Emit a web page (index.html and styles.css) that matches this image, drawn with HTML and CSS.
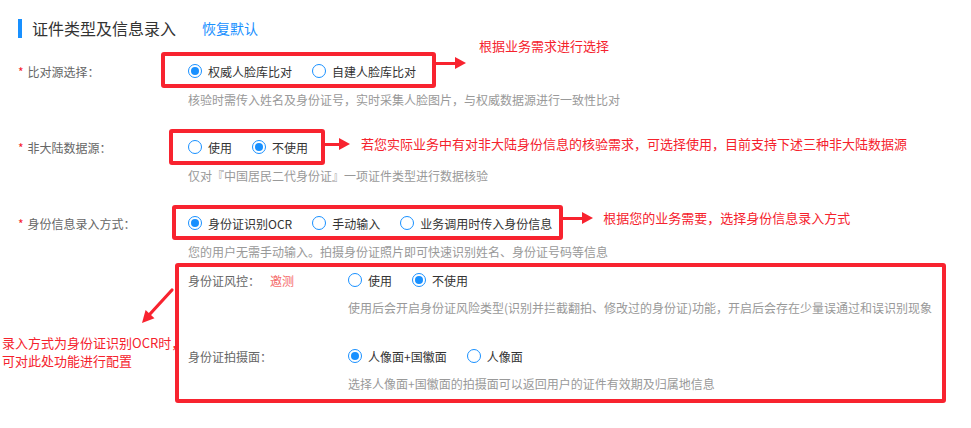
FILE: index.html
```html
<!DOCTYPE html>
<html lang="zh-CN">
<head>
  <meta charset="UTF-8">
  <meta name="viewport" content="width=device-width, initial-scale=1.0">
  <title>证件类型及信息录入</title>
  <link rel="stylesheet" href="styles.css">
</head>
<body>
  <div class="page">
    <div class="section-title">
      <span class="title-text">证件类型及信息录入</span>
      <a class="title-link">恢复默认</a>
    </div>

    <div class="form-item">
      <div class="form-label"><span class="required">*</span>比对源选择：</div>
      <div class="form-control">
        <div class="radio-group">
          <label class="radio checked"><span class="radio-dot"></span>权威人脸库比对</label>
          <label class="radio"><span class="radio-dot"></span>自建人脸库比对</label>
          <span class="frame frame-source">
            <span class="callout callout-source">
              <span class="arrow"></span>
              <span class="note">根据业务需求进行选择</span>
            </span>
          </span>
        </div>
        <div class="form-desc">核验时需传入姓名及身份证号，实时采集人脸图片，与权威数据源进行一致性比对</div>
      </div>
    </div>

    <div class="form-item">
      <div class="form-label"><span class="required">*</span>非大陆数据源：</div>
      <div class="form-control">
        <div class="radio-group">
          <label class="radio"><span class="radio-dot"></span>使用</label>
          <label class="radio checked"><span class="radio-dot"></span>不使用</label>
          <span class="frame frame-mainland">
            <span class="callout callout-mainland">
              <span class="arrow arrow-short"></span>
              <span class="note">若您实际业务中有对非大陆身份信息的核验需求，可选择使用，目前支持下述三种非大陆数据源</span>
            </span>
          </span>
        </div>
        <div class="form-desc">仅对『中国居民二代身份证』一项证件类型进行数据核验</div>
      </div>
    </div>

    <div class="form-item">
      <div class="form-label"><span class="required">*</span>身份信息录入方式：</div>
      <div class="form-control">
        <div class="radio-group">
          <label class="radio checked"><span class="radio-dot"></span>身份证识别OCR</label>
          <label class="radio"><span class="radio-dot"></span>手动输入</label>
          <label class="radio"><span class="radio-dot"></span>业务调用时传入身份信息</label>
          <span class="frame frame-input">
            <span class="callout callout-input">
              <span class="arrow"></span>
              <span class="note">根据您的业务需要，选择身份信息录入方式</span>
            </span>
          </span>
        </div>
        <div class="form-desc">您的用户无需手动输入。拍摄身份证照片即可快速识别姓名、身份证号码等信息</div>
      </div>
    </div>

    <div class="sub-panel">
      <div class="form-item sub-item">
        <div class="form-label">身份证风控：<span class="beta">邀测</span></div>
        <div class="form-control">
          <div class="radio-group">
            <label class="radio"><span class="radio-dot"></span>使用</label>
            <label class="radio checked"><span class="radio-dot"></span>不使用</label>
          </div>
          <div class="form-desc">使用后会开启身份证风险类型(识别并拦截翻拍、修改过的身份证)功能，开启后会存在少量误通过和误识别现象</div>
        </div>
      </div>

      <div class="form-item sub-item">
        <div class="form-label">身份证拍摄面：</div>
        <div class="form-control">
          <div class="radio-group">
            <label class="radio checked"><span class="radio-dot"></span>人像面+国徽面</label>
            <label class="radio"><span class="radio-dot"></span>人像面</label>
          </div>
          <div class="form-desc">选择人像面+国徽面的拍摄面可以返回用户的证件有效期及归属地信息</div>
        </div>
      </div>

      <svg class="diag-arrow" width="38" height="41" viewBox="0 0 38 41">
        <line x1="34" y1="4" x2="12" y2="28" stroke="#f8232f" stroke-width="3.2" stroke-linecap="round"/>
        <polygon points="4,37 16.5,32.2 7.6,24.1" fill="#f8232f"/>
      </svg>
      <div class="side-note">
        <div>录入方式为身份证识别OCR时，</div>
        <div>可对此处功能进行配置</div>
      </div>
    </div>
  </div>
</body>
</html>
```

FILE: styles.css
```css
body {
  margin: 0;
  background-color: #fff;
  font-family: "Noto Sans CJK SC", "Noto Sans", sans-serif;
  font-size: 12px;
  color: #333;
}

.page {
  padding: 19px 0 0 18px;
}

.section-title {
  display: flex;
  align-items: center;
  height: 19px;
  border-left: 4px solid #1890ff;
  padding-left: 10px;
}

.title-text {
  font-size: 16px;
  line-height: 19px;
  color: #333;
}

.title-link {
  margin-left: 26px;
  font-size: 14px;
  line-height: 19px;
  color: #1890ff;
  cursor: pointer;
}

.form-item {
  display: flex;
  margin-top: 28px;
  line-height: 20px;
}

.section-title + .form-item {
  margin-top: 24px;
}

.form-label {
  width: 170px;
  flex-shrink: 0;
  color: #666;
}

.required {
  color: #f5222d;
  margin-right: 4px;
}

.form-control {
  display: flex;
  flex-direction: column;
  align-items: flex-start;
}

.radio-group {
  position: relative;
  display: flex;
  align-items: center;
  gap: 20px;
  height: 20px;
}

.radio {
  display: inline-flex;
  align-items: center;
  gap: 6px;
  color: #333;
  cursor: pointer;
}

.radio-dot {
  position: relative;
  width: 14px;
  height: 14px;
  margin-top: -2px;
  box-sizing: border-box;
  border: 1px solid #1890ff;
  border-radius: 50%;
}

.radio.checked .radio-dot::after {
  content: '';
  position: absolute;
  inset: 2px;
  border-radius: 50%;
  background-color: #1890ff;
}

.form-desc {
  margin-top: 8px;
  color: #999;
}

/* red annotation boxes */
.frame {
  position: absolute;
  border: 4px solid #f8232f;
  border-radius: 3px;
  pointer-events: none;
}

.frame-source {
  inset: -10px -20px -6px -27px;
}

.frame-mainland {
  inset: -9px -17px -7px -19px;
}

.frame-input {
  inset: -9px -11px -6px -16px;
}

.callout {
  position: absolute;
  left: calc(100% + 4px);
  display: flex;
  align-items: center;
  height: 20px;
}

.callout-source {
  top: -3px;
}

.callout-mainland {
  top: 1px;
}

.callout-input {
  top: -1px;
}

.arrow {
  position: relative;
  width: 30px;
  height: 12px;
  flex-shrink: 0;
}

.arrow-short {
  width: 25px;
}

.arrow::before {
  content: '';
  position: absolute;
  left: 0;
  right: 8px;
  top: 4.5px;
  height: 3px;
  background-color: #f8232f;
}

.arrow::after {
  content: '';
  position: absolute;
  right: 0;
  top: 0;
  border-left: 11px solid #f8232f;
  border-top: 6px solid transparent;
  border-bottom: 6px solid transparent;
}

.note {
  margin-left: 10px;
  font-size: 13px;
  line-height: 20px;
  color: #f5222d;
  white-space: nowrap;
}

.callout-source .note {
  margin-left: 13px;
  margin-bottom: 34px;
}

.callout-mainland .note {
  margin-left: 11px;
}

/* OCR sub options */
.sub-panel {
  position: relative;
  width: 771px;
  box-sizing: border-box;
  margin: 1px 0 0 157px;
  padding: 4px 0 5px 9px;
  border: 4px solid #f8232f;
  border-radius: 3px;
}

.sub-panel .form-item {
  margin-top: 29px;
}

.sub-panel .form-item:first-child {
  margin-top: 0;
}

.sub-item .form-label {
  display: flex;
  gap: 10px;
  width: 160px;
}

.sub-item .form-desc {
  margin-top: 7px;
}

.beta {
  color: #f56c6c;
}

.diag-arrow {
  position: absolute;
  left: -41px;
  top: 19px;
}

.side-note {
  position: absolute;
  left: -177px;
  top: 67px;
  font-size: 13px;
  line-height: 18px;
  color: #f5222d;
  white-space: nowrap;
}
```
